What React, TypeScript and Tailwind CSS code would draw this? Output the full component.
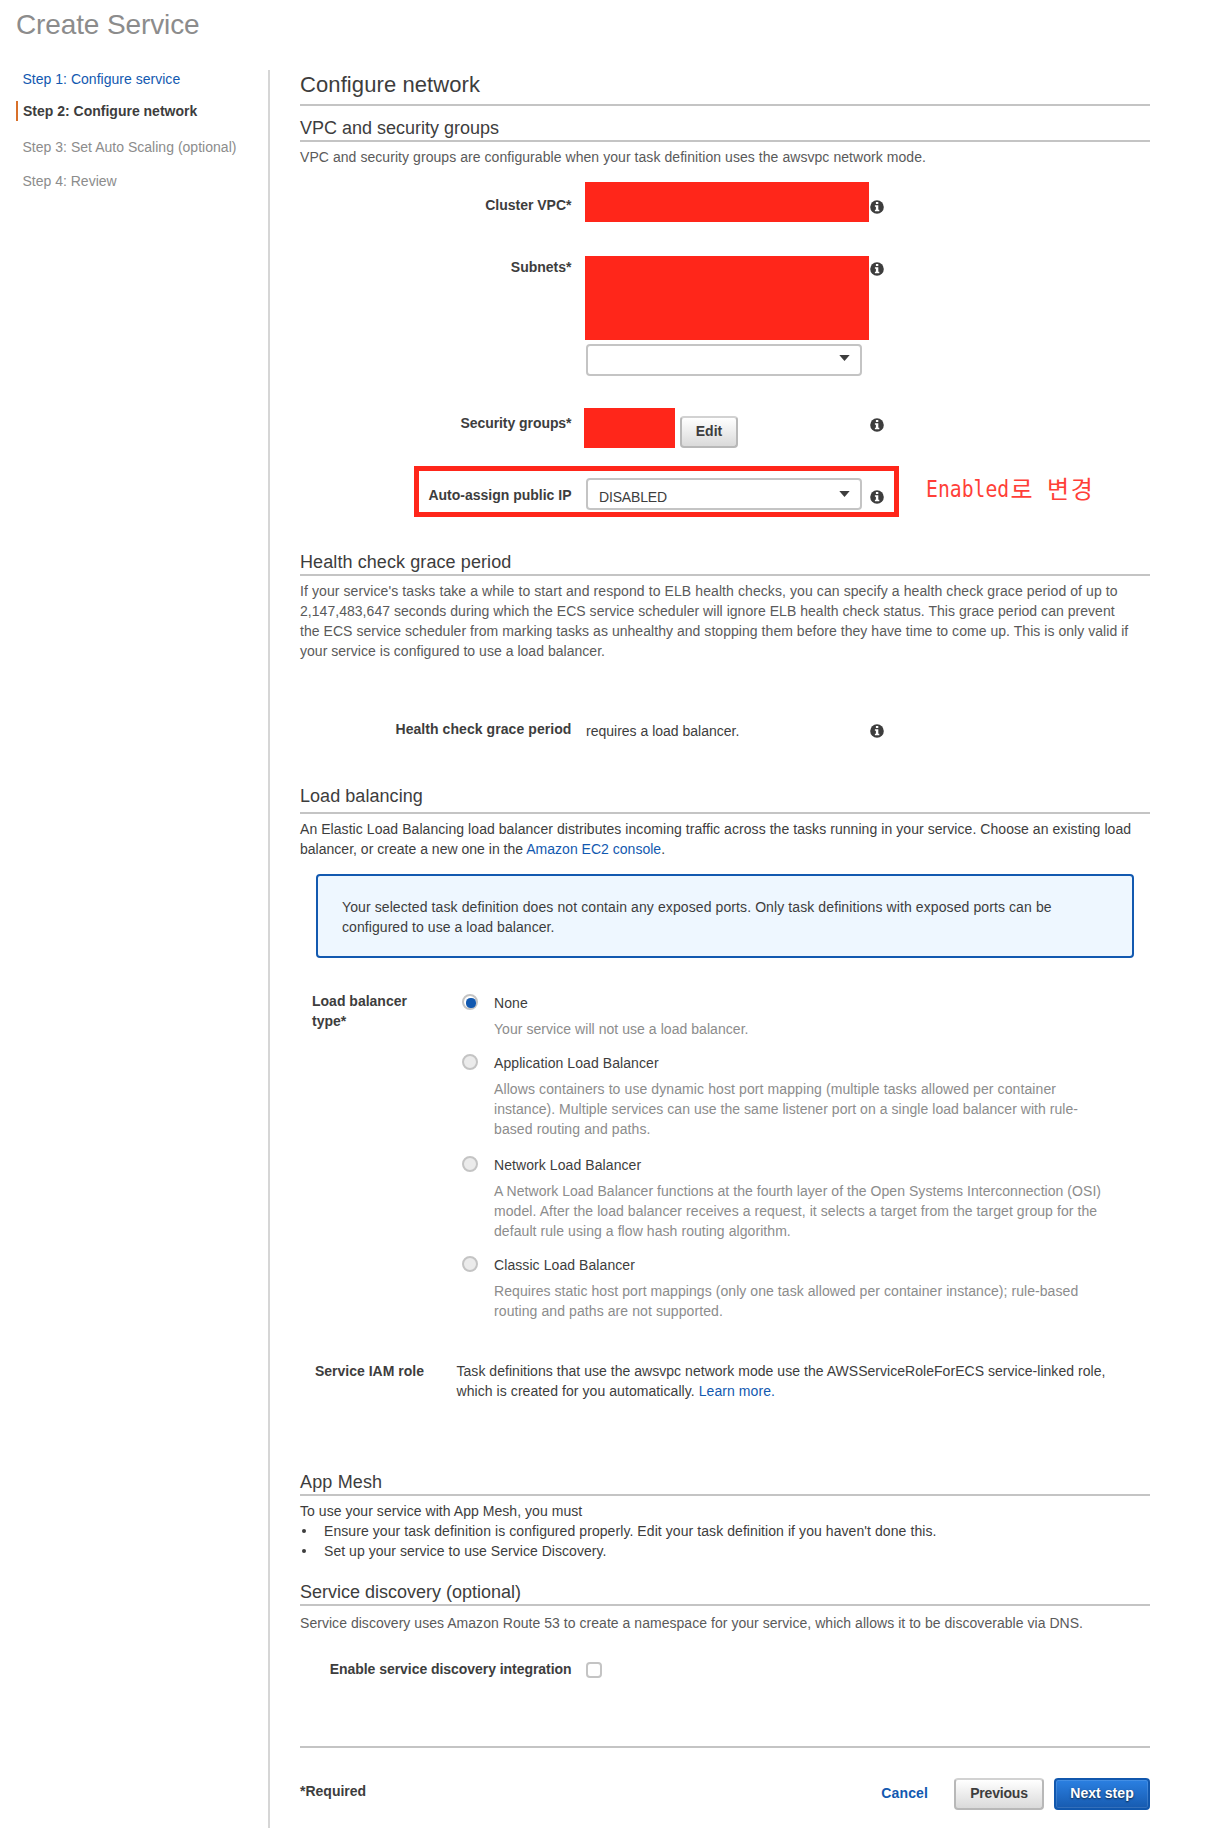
import type { ReactNode } from 'react';

function InfoIcon({ className = '' }: { className?: string }) {
  return (
    <svg viewBox="0 0 14 14" className={`block h-[14px] w-[14px] shrink-0 ${className}`} aria-hidden="true">
      <circle cx="7" cy="7" r="6.8" fill="#3d3d3d" />
      <path d="M5.9 2.1h2.4v2H5.9zM4.9 5.2h3.4v4.5h1v1.6H4.9V9.7h1V6.8h-1z" fill="#fff" />
    </svg>
  );
}

function Select({ value, className = '' }: { value?: string; className?: string }) {
  return (
    <div
      className={`flex h-8 w-[276px] shrink-0 items-start justify-between rounded border-2 border-[#c4c4c4] bg-white pl-[11px] pr-[10px] ${className}`}
    >
      <span className="pt-[7px] tracking-[-0.16px]">{value}</span>
      <svg viewBox="0 0 11 6" className={`h-[6px] w-[11px] ${value ? 'mt-[11px]' : 'mt-[9px]'}`} aria-hidden="true">
        <path d="M0.3 0h10.4L5.5 6z" fill="#3d3d3d" />
      </svg>
    </div>
  );
}

function Heading({ children, className = '' }: { children: ReactNode; className?: string }) {
  return <h2 className={`h-[26px] border-b-2 border-[#c4c4c4] text-[18px] leading-6 ${className}`}>{children}</h2>;
}

function Label({ children, className = '' }: { children: ReactNode; className?: string }) {
  return <div className={`w-[271.5px] shrink-0 text-right font-bold ${className}`}>{children}</div>;
}

type OptionProps = { title: string; checked?: boolean; children: ReactNode; className?: string };

function RadioOption({ title, checked, children, className = '' }: OptionProps) {
  return (
    <div className={`flex ${className}`}>
      <span
        className={`mt-px flex h-4 w-4 shrink-0 rounded-full border-2 border-[#c4c4c4] ${
          checked ? 'bg-white pl-[2px] pt-[2px]' : 'bg-[#ebebeb]'
        }`}
      >
        {checked && <span className="h-[10px] w-[10px] shrink-0 rounded-[4.5px] bg-[#1259b0]" />}
      </span>
      <div className="ml-[16.5px]">
        <div className="tracking-[0.08px]">{title}</div>
        <div className="mt-[6px] tracking-[0.05px] text-[#8c8c8c]">{children}</div>
      </div>
    </div>
  );
}

function GrayButton({ children, className = '' }: { children: ReactNode; className?: string }) {
  return (
    <button
      className={`flex h-8 shrink-0 justify-center rounded border-2 border-[#b8b8b8] border-t-[#d2d2d2] bg-gradient-to-b from-white to-[#dadada] pt-[3px] font-bold ${className}`}
    >
      {children}
    </button>
  );
}

export default function App() {
  return (
    <div className="flex h-[1828px] w-[1214px] flex-col overflow-hidden bg-white font-['Liberation_Sans',Arial,sans-serif] text-[14px] leading-5 whitespace-nowrap text-[#3d3d3d]">
      <header className="h-[70px] shrink-0 pt-[9px] pl-4">
        <h1 className="text-[28px] leading-8 tracking-[-0.12px] text-[#8c8c8c]">Create Service</h1>
      </header>

      <div className="flex flex-1">
        <nav className="w-[268px] shrink-0 pl-4 text-[#8c8c8c]">
          <div className="mt-[-1px] pl-[6.5px] tracking-[0.02px] text-[#1259b0]">Step 1: Configure service</div>
          <div className="mt-3 border-l-2 border-[#d8702a] pl-[5px] font-bold text-[#3d3d3d]">
            Step 2: Configure network
          </div>
          <div className="mt-4 pl-[6.5px] tracking-[0.02px]">Step 3: Set Auto Scaling (optional)</div>
          <div className="mt-[14px] pl-[6.5px]">Step 4: Review</div>
        </nav>

        <main className="flex w-[882px] shrink-0 flex-col border-l-2 border-[#d6d6d6] pl-[30px]">
          <h1 className="h-9 shrink-0 border-b-2 border-[#c4c4c4] pt-px text-[22px] leading-7 tracking-[0.09px]">
            Configure network
          </h1>

          <Heading className="mt-[10px]">VPC and security groups</Heading>
          <p className="mt-[5px] tracking-[0.06px] text-[#5a5a5a]">
            VPC and security groups are configurable when your task definition uses the awsvpc network mode.
          </p>

          <div className="mt-[15px] flex h-[40px] items-start">
            <Label className="mt-[13px]">Cluster VPC*</Label>
            <div className="ml-[13px] h-[39.5px] w-[284px] bg-[#ff261a]" />
            <InfoIcon className="mt-[18px] ml-[1.5px]" />
          </div>

          <div className="mt-[33.5px] flex h-[120.5px] items-start">
            <Label className="mt-[1.5px]">Subnets*</Label>
            <div className="ml-[13px] w-[284px]">
              <div className="h-[84.5px] bg-[#ff261a]" />
              <Select className="mt-1 ml-[1.5px]" />
            </div>
            <InfoIcon className="mt-[6.5px] ml-[1.5px]" />
          </div>

          <div className="mt-8 flex h-10 items-start">
            <Label className="mt-[5px] tracking-[-0.06px]">Security groups*</Label>
            <div className="ml-[12px] h-[39.5px] w-[91px] bg-[#ff261a]" />
            <GrayButton className="mt-2 ml-[5.5px] w-[58px]">Edit</GrayButton>
            <InfoIcon className="mt-[10px] ml-[132px]" />
          </div>

          <div className="mt-[18px] flex h-[51px] items-start">
            <div className="ml-[114px] flex h-[51px] w-[485px] shrink-0 items-start border-[5px] border-[#ff261a]">
              <div className="mt-[14px] w-[152.5px] shrink-0 text-right font-bold">Auto-assign public IP</div>
              <Select value="DISABLED" className="mt-[7px] ml-[14.5px]" />
              <InfoIcon className="mt-[19px] ml-2" />
            </div>
            <div className="mt-[7px] ml-[27px] flex text-[24px] leading-8 text-[#ff3f38]">
              <span className="w-[84.5px] origin-left scale-x-[0.84] font-['DejaVu_Sans_Mono',monospace] text-[23.5px]">
                Enabled
              </span>
              <span className="mt-[-1px] font-['Noto_Sans_CJK_KR',sans-serif] tracking-[1.5px]">로</span>
              <span className="mt-[-1px] ml-[13px] font-['Noto_Sans_CJK_KR',sans-serif] tracking-[1.5px]">변경</span>
            </div>
          </div>

          <Heading className="mt-[33px] tracking-[0.09px]">Health check grace period</Heading>
          <div className="mt-[5px] text-[#5a5a5a]">
            <div className="tracking-[0.09px]">
              If your service's tasks take a while to start and respond to ELB health checks, you can specify a health
              check grace period of up to
            </div>
            <div className="tracking-[0.038px]">
              2,147,483,647 seconds during which the ECS service scheduler will ignore ELB health check status. This
              grace period can prevent
            </div>
            <div className="tracking-[0.046px]">
              the ECS service scheduler from marking tasks as unhealthy and stopping them before they have time to come
              up. This is only valid if
            </div>
            <div className="tracking-[0.03px]">your service is configured to use a load balancer.</div>
          </div>

          <div className="mt-[58px] flex h-[22px] items-start">
            <Label className="tracking-[0.07px]">Health check grace period</Label>
            <div className="mt-[2px] ml-[14.5px] w-[284px]">requires a load balancer.</div>
            <InfoIcon className="mt-[5px]" />
          </div>

          <h2 className="mt-[43px] h-[30px] border-b-2 border-[#c4c4c4] text-[18px] leading-6 tracking-[0.05px]">
            Load balancing
          </h2>
          <div className="mt-[5px]">
            <div className="tracking-[0.06px]">
              An Elastic Load Balancing load balancer distributes incoming traffic across the tasks running in your
              service. Choose an existing load
            </div>
            <div className="tracking-[0.015px]">
              balancer, or create a new one in the <a className="text-[#1259b0]">Amazon EC2 console</a>.
            </div>
          </div>

          <div className="mt-[15px] ml-4 h-[84px] w-[818px] rounded border-2 border-[#1259b0] bg-[#eef7ff] pt-[21px] pl-6 tracking-[0.1px]">
            <div>
              Your selected task definition does not contain any exposed ports. Only task definitions with exposed ports
              can be
            </div>
            <div className="tracking-[0.07px]">configured to use a load balancer.</div>
          </div>

          <div className="mt-[33px] flex items-start">
            <div className="ml-[12px] w-[149.5px] shrink-0 font-bold">
              <div>Load balancer</div>
              <div>type*</div>
            </div>
            <div className="mt-[2px]">
              <RadioOption title="None" checked>
                <div>Your service will not use a load balancer.</div>
              </RadioOption>
              <RadioOption className="mt-[14px]" title="Application Load Balancer">
                <div className="tracking-[0.1px]">
                  Allows containers to use dynamic host port mapping (multiple tasks allowed per container
                </div>
                <div className="tracking-[0.045px]">
                  instance). Multiple services can use the same listener port on a single load balancer with rule-
                </div>
                <div className="tracking-[0.1px]">based routing and paths.</div>
              </RadioOption>
              <RadioOption className="mt-4" title="Network Load Balancer">
                <div className="tracking-[0.05px]">
                  A Network Load Balancer functions at the fourth layer of the Open Systems Interconnection (OSI)
                </div>
                <div className="tracking-[0.07px]">
                  model. After the load balancer receives a request, it selects a target from the target group for the
                </div>
                <div className="tracking-[0.07px]">default rule using a flow hash routing algorithm.</div>
              </RadioOption>
              <RadioOption className="mt-[14px]" title="Classic Load Balancer">
                <div className="tracking-[0.065px]">
                  Requires static host port mappings (only one task allowed per container instance); rule-based
                </div>
                <div className="tracking-[0.09px]">routing and paths are not supported.</div>
              </RadioOption>
            </div>
          </div>

          <div className="mt-10 flex items-start">
            <div className="ml-[15px] w-[141.5px] shrink-0 font-bold">Service IAM role</div>
            <div className="tracking-[0.036px]">
              <div>
                Task definitions that use the awsvpc network mode use the AWSServiceRoleForECS service-linked role,
              </div>
              <div className="tracking-[0.07px]">
                which is created for you automatically. <a className="text-[#1259b0]">Learn more.</a>
              </div>
            </div>
          </div>

          <Heading className="mt-[69px] tracking-[0.15px]">App Mesh</Heading>
          <div className="mt-[5px] tracking-[0.075px]">
            <div className="tracking-[0.05px]">To use your service with App Mesh, you must</div>
            <ul>
              <li className="flex items-center">
                <span className="ml-[2px] h-[4px] w-[4px] rounded-full bg-[#3d3d3d]" />
                <span className="ml-[18px]">
                  Ensure your task definition is configured properly. Edit your task definition if you haven't done
                  this.
                </span>
              </li>
              <li className="flex items-center">
                <span className="ml-[2px] h-[4px] w-[4px] rounded-full bg-[#3d3d3d]" />
                <span className="ml-[18px] tracking-[0.04px]">Set up your service to use Service Discovery.</span>
              </li>
            </ul>
          </div>

          <Heading className="mt-[19px]">Service discovery (optional)</Heading>
          <p className="mt-[7px] tracking-[0.04px] text-[#5a5a5a]">
            Service discovery uses Amazon Route 53 to create a namespace for your service, which allows it to be
            discoverable via DNS.
          </p>

          <div className="mt-[26px] flex h-5 items-start">
            <Label className="tracking-[-0.05px]">Enable service discovery integration</Label>
            <span className="mt-[3px] ml-[14.5px] h-4 w-4 rounded border-2 border-[#c4c4c4] bg-white" />
          </div>

          <div className="mt-[67px] h-[2px] shrink-0 bg-[#c4c4c4]" />

          <footer className="mt-[30px] flex h-8 items-start">
            <div className="mt-[3px] font-bold">*Required</div>
            <a className="mt-[5px] ml-auto font-bold tracking-[0.13px] text-[#1259b0]">Cancel</a>
            <GrayButton className="ml-[26px] w-[90px] tracking-[-0.2px]">Previous</GrayButton>
            <button className="ml-[10px] flex h-8 w-24 justify-center rounded border-2 border-[#1157ad] bg-gradient-to-b from-[#2b80e2] to-[#175bb0] pt-[3px] font-bold tracking-[0.06px] text-white shadow-[inset_0_0_0_1px_rgba(255,255,255,0.12)] [text-shadow:0_1px_2px_rgba(0,0,0,0.7)]">
              Next step
            </button>
          </footer>
        </main>
      </div>
    </div>
  );
}
